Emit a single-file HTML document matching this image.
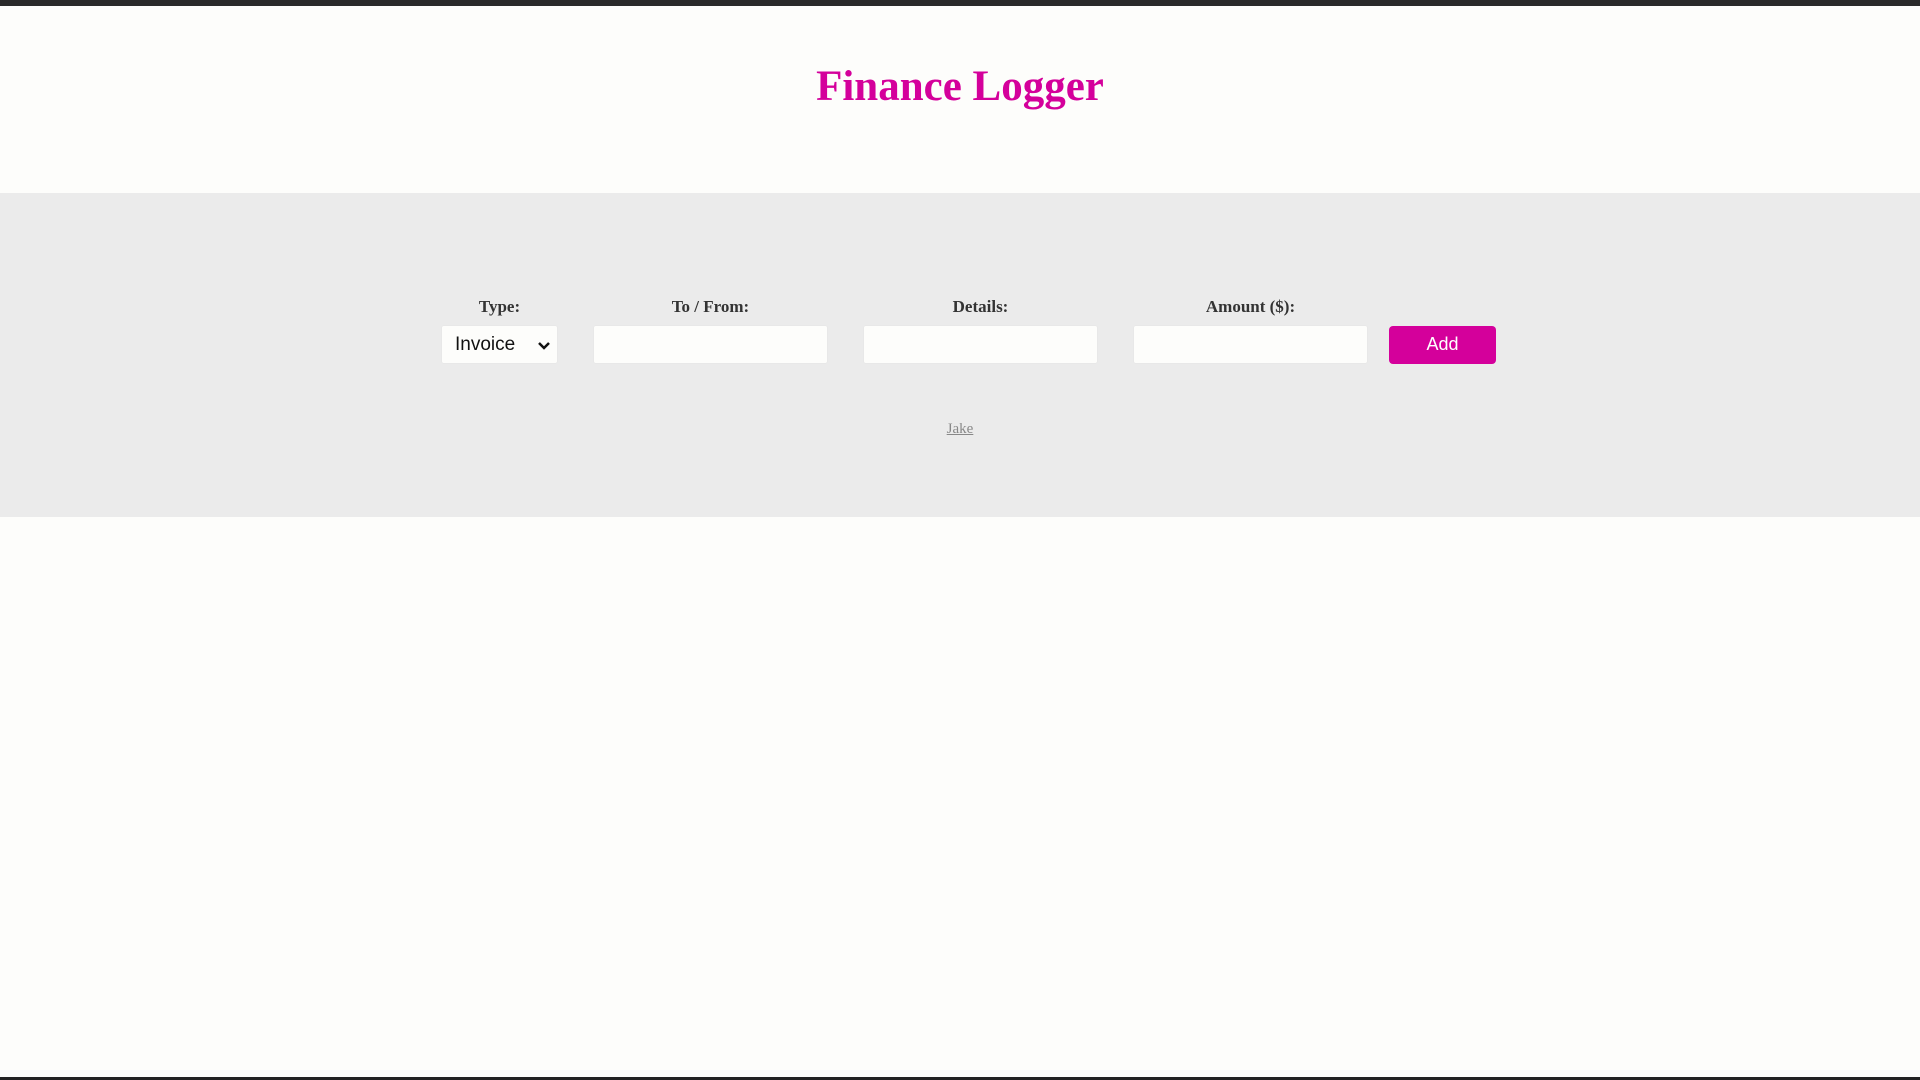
<!DOCTYPE html>
<html><head><meta charset="utf-8"><style>
*{box-sizing:border-box;margin:0;padding:0}
html,body{width:1920px;height:1080px;overflow:hidden;background:#fdfdfb;font-family:"Liberation Serif",serif}
.topbar{position:absolute;left:0;top:0;width:1920px;height:6px;background:#2a2a2a}
.botbar{position:absolute;left:0;top:1077px;width:1920px;height:3px;background:#222}
h1{position:absolute;top:62px;left:0;width:1920px;text-align:center;color:#d4009b;font-size:43px;font-weight:bold}
.band{position:absolute;top:193px;left:0;width:1920px;height:324px;background:#ebebeb}
.lbl{position:absolute;top:297px;font-weight:bold;font-size:17px;color:#333;text-align:center}
.box{position:absolute;top:325px;height:39px;background:#fdfdfb;border-radius:3px;border:1px solid #e8e8e8}
.sel{font-family:"Liberation Sans",sans-serif;font-size:19px;color:#111;padding:8px 0 0 13px}
.btn{position:absolute;top:326px;left:1389px;width:107px;height:38px;background:#d4009b;border-radius:4px;color:#fff;font-family:"Liberation Sans",sans-serif;font-size:18px;text-align:center;line-height:37px}
.jake{position:absolute;top:421px;left:0;width:1920px;text-align:center;font-size:15px;color:#888;text-decoration:underline}
</style></head><body>
<div class="topbar"></div>
<h1>Finance Logger</h1>
<div class="band"></div>
<div class="lbl" style="left:441px;width:117px">Type:</div>
<div class="lbl" style="left:593px;width:235px">To / From:</div>
<div class="lbl" style="left:863px;width:235px">Details:</div>
<div class="lbl" style="left:1133px;width:235px">Amount ($):</div>
<div class="box sel" style="left:441px;width:117px">Invoice
<svg style="position:absolute;right:6px;top:15px" width="14" height="10" viewBox="0 0 14 10"><path d="M2 2 L7 7 L12 2" stroke="#111" stroke-width="2.5" fill="none"/></svg></div>
<div class="box" style="left:593px;width:235px"></div>
<div class="box" style="left:863px;width:235px"></div>
<div class="box" style="left:1133px;width:235px"></div>
<div class="btn">Add</div>
<div class="jake">Jake</div>
<div class="botbar"></div>
</body></html>
